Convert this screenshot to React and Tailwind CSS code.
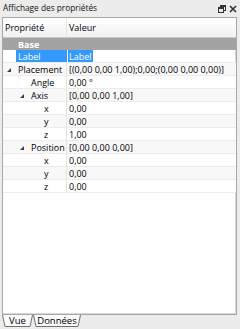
import React from 'react';

const rows = [
  { name: 'Placement', value: '[(0,00 0,00 1,00);0,00;(0,00 0,00 0,00)]', level: 0, arrow: true },
  { name: 'Angle', value: '0,00 °', level: 1 },
  { name: 'Axis', value: '[0,00 0,00 1,00]', level: 1, arrow: true },
  { name: 'x', value: '0,00', level: 2 },
  { name: 'y', value: '0,00', level: 2 },
  { name: 'z', value: '1,00', level: 2 },
  { name: 'Position', value: '[0,00 0,00 0,00]', level: 1, arrow: true },
  { name: 'x', value: '0,00', level: 2 },
  { name: 'y', value: '0,00', level: 2 },
  { name: 'z', value: '0,00', level: 2 },
];

const indent = ['pl-[15px]', 'pl-[28px]', 'pl-[41px]'];
const arrowPos = ['left-[4px]', 'left-[17px]', 'left-[30px]'];

const Arrow = ({ className }) => (
  <svg className={`absolute top-[5px] ${className}`} width="4" height="4" viewBox="0 0 4 4">
    <path d="M4 0 L4 4 L0 4 Z" fill="#404040" />
  </svg>
);

const Tab = ({ label, width }) => (
  <div className="relative h-[13px] flex items-center justify-center" style={{ width }}>
    <svg className="absolute inset-0" width={width} height="13" viewBox={`0 0 ${width} 13`}>
      <path d={`M0.5 0 L3 11.5 L${width - 3} 11.5 L${width - 0.5} 0`} fill="#fafafa" stroke="#707070" strokeWidth="1" />
    </svg>
    <span className="relative text-[9.5px] leading-none text-black -mt-[2px]">{label}</span>
  </div>
);

const App = () => {
  return (
    <div className="w-[240px] h-[329px] bg-[#ececec] flex flex-col overflow-hidden" style={{ fontFamily: '"Open Sans", "Liberation Sans", Arial, sans-serif' }}>
      {/* Barre de titre */}
      <div className="h-[17px] flex items-center justify-between pl-[3px] pr-[3px] shrink-0">
        <span className="text-[8.3px] text-[#111] leading-none">Affichage des propriétés</span>
        <div className="flex items-center gap-[3px]">
          <svg width="8" height="8" viewBox="0 0 8 8">
            <rect x="2.5" y="0.5" width="5" height="5" fill="none" stroke="#333" strokeWidth="1" />
            <rect x="2.5" y="0.5" width="5" height="1.5" fill="#333" />
            <rect x="0.5" y="2.5" width="5" height="5" fill="#ececec" stroke="#333" strokeWidth="1" />
            <rect x="0.5" y="2.5" width="5" height="1.5" fill="#333" />
          </svg>
          <svg width="8" height="8" viewBox="0 0 8 8">
            <path d="M1 1 L7 7 M7 1 L1 7" stroke="#333" strokeWidth="1.6" />
          </svg>
        </div>
      </div>

      {/* Panneau */}
      <div className="flex-1 ml-[2px] mr-[3px] border border-[#a8a8a8] bg-white flex flex-col min-h-0 shadow-[inset_-1px_-1px_0_#d8d8d8]">
        {/* En-tête */}
        <div className="h-[20px] flex items-center border-b border-[#c8c8c8] bg-gradient-to-b from-white to-[#f2f2f2] shrink-0 text-[9px] text-black">
          <div className="w-[64px] pl-[2px] border-r border-[#e4e4e4] h-full flex items-center">Propriété</div>
          <div className="pl-[2px]">Valeur</div>
        </div>

        {/* Groupe Base */}
        <div className="h-[12px] bg-[#a3a3a3] flex items-center pl-[15px] text-[9px] font-bold text-white leading-none shrink-0">Base</div>

        {/* Ligne Label sélectionnée */}
        <div className="h-[13px] flex items-center border-b border-[#ececec] text-[9px] leading-none shrink-0">
          <div className="w-[64px] pl-[13px] h-full">
            <div className="h-full bg-[#3399ff] text-white flex items-center pl-[2px]">Label</div>
          </div>
          <div className="pl-[1px] h-full flex items-center">
            <span className="bg-[#3399ff] text-white px-[1px] h-[12px] flex items-center">Label</span>
          </div>
        </div>

        {rows.map((r, i) => (
          <div key={i} className={`h-[13px] flex items-center border-b border-[#ececec] text-[9px] leading-none text-black shrink-0 ${i % 2 === 0 ? 'bg-[#f8f8f8]' : 'bg-white'}`}>
            <div className={`relative w-[64px] h-full flex items-center border-r border-[#e4e4e4] ${indent[r.level]}`}>
              {r.arrow && <Arrow className={arrowPos[r.level]} />}
              {r.name}
            </div>
            <div className="pl-[2px] whitespace-nowrap">{r.value}</div>
          </div>
        ))}
        <div className="flex-1" />
      </div>

      {/* Onglets */}
      <div className="h-[14px] flex items-start pl-[2px] shrink-0">
        <Tab label="Vue" width={31} />
        <Tab label="Données" width={48} />
      </div>
    </div>
  );
};

export default App;
